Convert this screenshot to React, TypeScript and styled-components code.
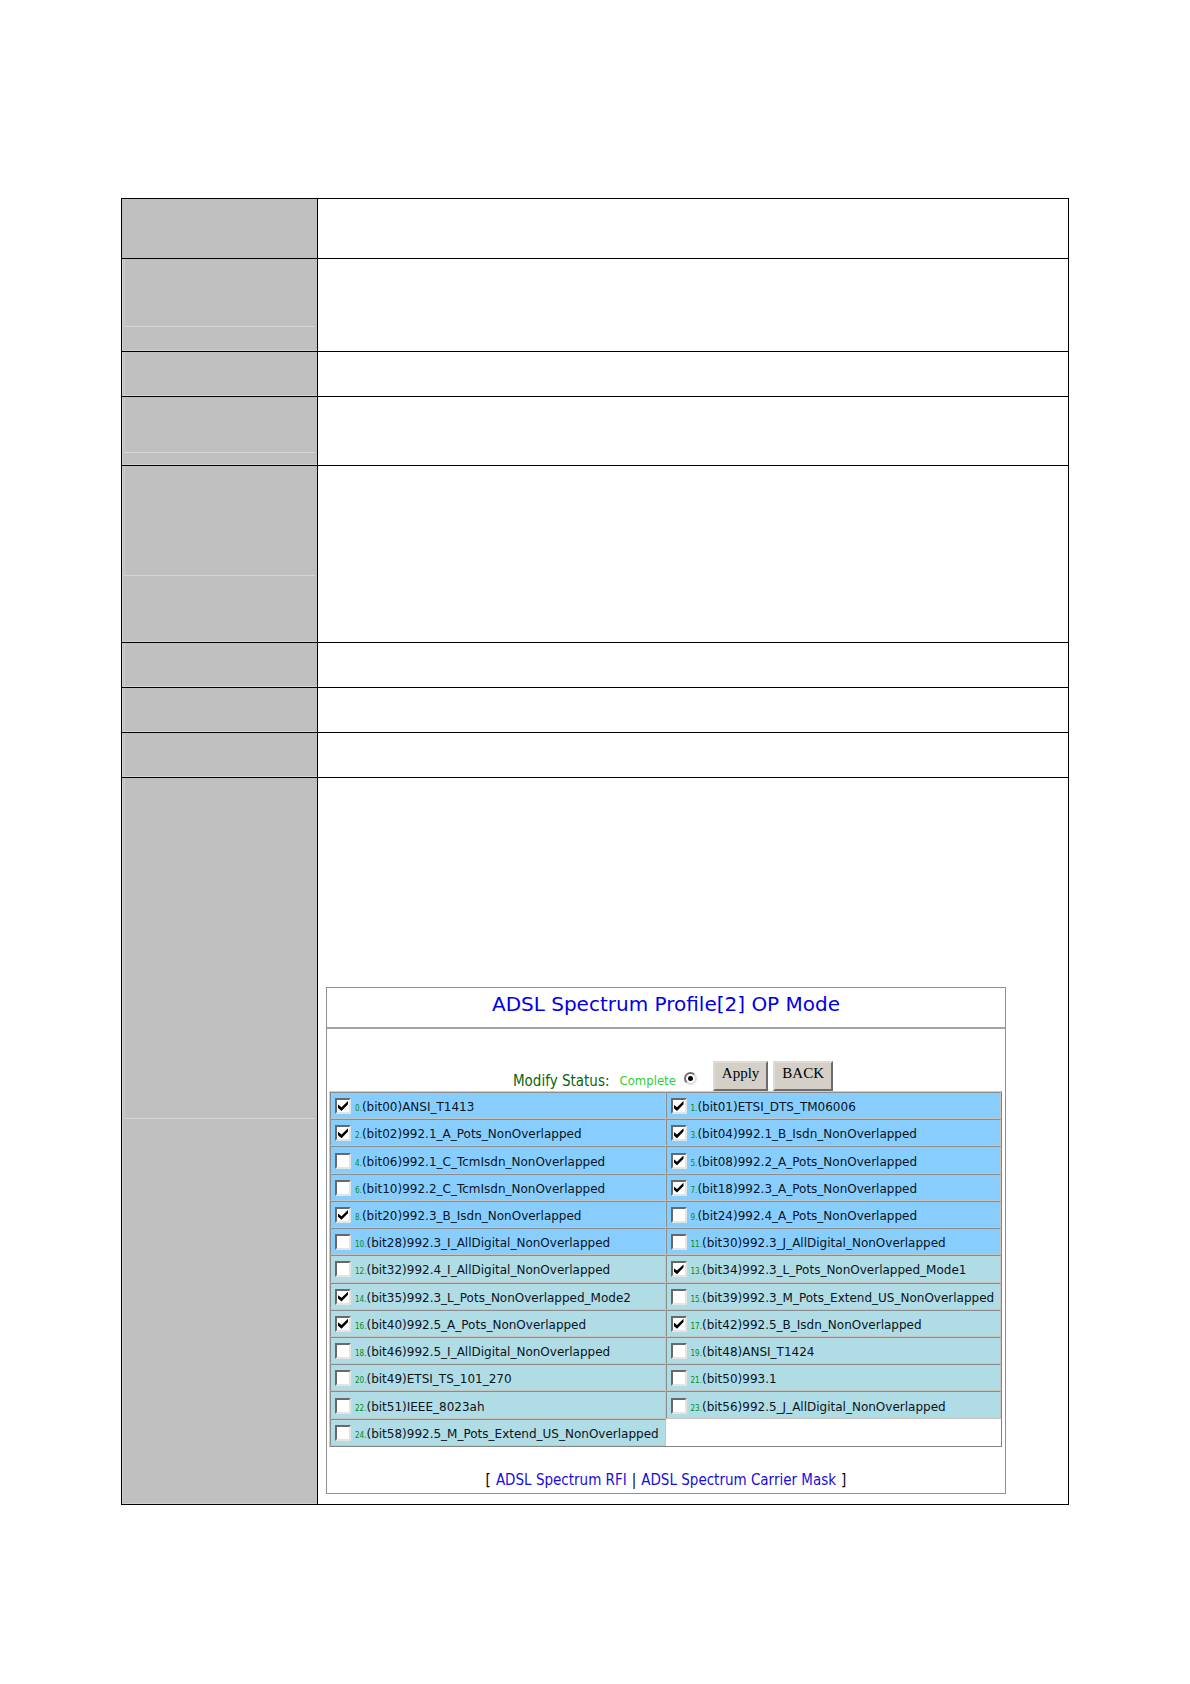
import React, { FC } from 'react';
import styled, { createGlobalStyle } from 'styled-components';

const Colors = {
  black: '#000000',
  white: '#ffffff',
  grey: '#c0c0c0',
  greyLight: '#d6d6d6',
  line: '#909090',
  sky: '#87ceff',
  pale: '#b0dce6',
  link: '#1a0be0',
  title: '#0000e6',
};

const Fonts = {
  wide: "'DejaVu Sans', sans-serif",
  narrow: "'DejaVu Sans Condensed', 'DejaVu Sans', sans-serif",
  serif: "'Liberation Serif', serif",
};

const GlobalStyle = createGlobalStyle`
* {
  box-sizing: border-box;
}
body {
  margin: 0;
  background-color: ${Colors.white};
  font-family: ${Fonts.narrow};
}
`;

const Page = styled.main`
padding: 198px 121px 179px;
`;

const Sheet = styled.div`
border: 1px solid ${Colors.black};
`;

const SheetRow = styled.div<{ $height: number }>`
display: grid;
grid-template-columns: 196px 1fr;
min-height: ${({ $height }) => $height}px;
border-bottom: 1px solid ${Colors.black};
&:last-child {
  border-bottom: none;
}
`;

const SideCell = styled.div<{ $plain?: boolean }>`
background-color: ${Colors.grey};
border-right: 1px solid ${Colors.black};
box-shadow: ${({ $plain }) => ($plain ? 'none' : 'inset 1px -1px 0 #d0d0d0')};
padding: 0 2px;
`;

const SideBlock = styled.div<{ $height: number }>`
height: ${({ $height }) => $height}px;
border-left: 1px solid #cccccc;
border-bottom: 1px solid ${Colors.greyLight};
`;

const MainCell = styled.div`
padding: 0 8px 10px;
`;

const Panel = styled.section`
width: 100%;
max-width: 680px;
margin-top: 209px;
border: 1px solid ${Colors.line};
`;

const PanelTitle = styled.h1`
margin: 0;
height: 41px;
padding-top: 4px;
border-bottom: 2px solid #a4a4a4;
text-align: center;
font-family: ${Fonts.wide};
font-size: 20px;
line-height: 24px;
font-weight: normal;
color: ${Colors.title};
`;

const Toolbar = styled.div`
display: flex;
justify-content: center;
align-items: flex-end;
height: 62px;
padding-left: 14px;
`;

const StatusLabel = styled.span`
font-size: 15px;
line-height: 20px;
color: #0a640a;
margin-right: 10px;
`;

const RadioLabel = styled.label`
display: flex;
align-items: center;
gap: 8px;
margin-right: 16px;
font-size: 13px;
line-height: 20px;
color: #32cd32;
`;

const Radio = styled.input`
appearance: none;
width: 13px;
height: 13px;
margin: 0 0 6px;
border: 2px solid;
border-color: #707070 #dddddd #dddddd #707070;
border-radius: 50%;
background: radial-gradient(circle, ${Colors.black} 0 2px, ${Colors.white} 3px);
`;

const Buttons = styled.div`
display: flex;
gap: 5px;
`;

const Button = styled.button`
height: 30px;
padding: 0 7px 6px;
border: 2px solid;
border-color: #dedad4 #6c6c6c #6c6c6c #dedad4;
background-color: #d4d0c8;
font-family: ${Fonts.serif};
font-size: 15px;
line-height: 20px;
color: ${Colors.black};
`;

const ModeTable = styled.table`
width: calc(100% - 5px);
height: 356px;
margin-left: 2px;
table-layout: fixed;
border-collapse: separate;
border-spacing: 0;
border: 1px solid;
border-color: #d0ccc8 #848484 #848484 #d0ccc8;
`;

const ModeCell = styled.td<{ $pale: boolean }>`
padding: 0 0 0 4px;
border: 1px solid;
border-color: #8c8c8c #c8c4c0 #c8c4c0 #8c8c8c;
background-color: ${({ $pale }) => ($pale ? Colors.pale : Colors.sky)};
`;

const EmptyCell = styled.td`
padding: 0;
`;

const ModeLabel = styled.label`
display: flex;
align-items: baseline;
height: 23px;
font-family: ${Fonts.wide};
font-size: 12px;
line-height: 27px;
white-space: nowrap;
color: #0a1420;
`;

const Checkbox = styled.input`
appearance: none;
flex: none;
align-self: flex-start;
width: 16px;
height: 16px;
margin: 4px 4px 0 0;
border: 2px solid;
border-color: #686868 #e4e4e4 #e4e4e4 #686868;
background-color: ${Colors.white};
&:checked::after {
  content: '';
  display: block;
  width: 10px;
  height: 10px;
  margin: 1px;
  background-color: ${Colors.black};
  clip-path: polygon(0 35%, 35% 62%, 100% 0, 100% 32%, 35% 98%, 0 68%);
}
`;

const ModeIndex = styled.span`
font-family: ${Fonts.narrow};
font-size: 8px;
color: #008c14;
`;

const Footer = styled.nav`
display: flex;
justify-content: center;
gap: 5px;
padding: 23px 0 3px;
font-size: 15px;
line-height: 20px;
`;

const FooterLink = styled.a`
color: ${Colors.link};
text-decoration: none;
`;

const modes = [
  { name: '(bit00)ANSI_T1413', on: true },
  { name: '(bit01)ETSI_DTS_TM06006', on: true },
  { name: '(bit02)992.1_A_Pots_NonOverlapped', on: true },
  { name: '(bit04)992.1_B_Isdn_NonOverlapped', on: true },
  { name: '(bit06)992.1_C_TcmIsdn_NonOverlapped', on: false },
  { name: '(bit08)992.2_A_Pots_NonOverlapped', on: true },
  { name: '(bit10)992.2_C_TcmIsdn_NonOverlapped', on: false },
  { name: '(bit18)992.3_A_Pots_NonOverlapped', on: true },
  { name: '(bit20)992.3_B_Isdn_NonOverlapped', on: true },
  { name: '(bit24)992.4_A_Pots_NonOverlapped', on: false },
  { name: '(bit28)992.3_I_AllDigital_NonOverlapped', on: false },
  { name: '(bit30)992.3_J_AllDigital_NonOverlapped', on: false },
  { name: '(bit32)992.4_I_AllDigital_NonOverlapped', on: false },
  { name: '(bit34)992.3_L_Pots_NonOverlapped_Mode1', on: true },
  { name: '(bit35)992.3_L_Pots_NonOverlapped_Mode2', on: true },
  { name: '(bit39)992.3_M_Pots_Extend_US_NonOverlapped', on: false },
  { name: '(bit40)992.5_A_Pots_NonOverlapped', on: true },
  { name: '(bit42)992.5_B_Isdn_NonOverlapped', on: true },
  { name: '(bit46)992.5_I_AllDigital_NonOverlapped', on: false },
  { name: '(bit48)ANSI_T1424', on: false },
  { name: '(bit49)ETSI_TS_101_270', on: false },
  { name: '(bit50)993.1', on: false },
  { name: '(bit51)IEEE_8023ah', on: false },
  { name: '(bit56)992.5_J_AllDigital_NonOverlapped', on: false },
  { name: '(bit58)992.5_M_Pots_Extend_US_NonOverlapped', on: false },
];

const rowStarts = modes.map((_, i) => i).filter((i) => i % 2 === 0);

const Mode: FC<{ index: number }> = ({ index }) => {
  const mode = modes[index];
  if (!mode) {
    return <EmptyCell />;
  }
  return (
    <ModeCell $pale={index > 11}>
      <ModeLabel>
        <Checkbox type="checkbox" defaultChecked={mode.on} />
        <ModeIndex>{index}.</ModeIndex>
        {mode.name}
      </ModeLabel>
    </ModeCell>
  );
};

const OpModePanel: FC = () => {
  return (
    <Panel>
      <PanelTitle>ADSL Spectrum Profile[2] OP Mode</PanelTitle>
      <Toolbar>
        <StatusLabel>Modify Status:</StatusLabel>
        <RadioLabel>
          Complete
          <Radio type="radio" name="status" defaultChecked />
        </RadioLabel>
        <Buttons>
          <Button type="button">Apply</Button>
          <Button type="button">BACK</Button>
        </Buttons>
      </Toolbar>
      <ModeTable>
        <tbody>
          {rowStarts.map((start) => (
            <tr key={start}>
              <Mode index={start} />
              <Mode index={start + 1} />
            </tr>
          ))}
        </tbody>
      </ModeTable>
      <Footer>
        <span>[</span>
        <FooterLink href="#rfi">ADSL Spectrum RFI</FooterLink>
        <span>|</span>
        <FooterLink href="#mask">ADSL Spectrum Carrier Mask</FooterLink>
        <span>]</span>
      </Footer>
    </Panel>
  );
};

// height of each row, and where the light rule falls in its grey cell
const sheetRows = [
  { height: 60 },
  { height: 93, block: 68 },
  { height: 45, block: 44 },
  { height: 69, block: 56 },
  { height: 177, block: 110 },
  { height: 45, block: 44 },
  { height: 45, block: 44 },
  { height: 45, block: 44 },
];

const App: FC = () => {
  return (
    <>
      <GlobalStyle />
      <Page>
        <Sheet>
          {sheetRows.map((row, i) => (
            <SheetRow key={i} $height={row.height}>
              <SideCell $plain={!row.block}>{row.block && <SideBlock $height={row.block} />}</SideCell>
              <MainCell />
            </SheetRow>
          ))}
          <SheetRow $height={726}>
            <SideCell>
              <SideBlock $height={341} />
            </SideCell>
            <MainCell>
              <OpModePanel />
            </MainCell>
          </SheetRow>
        </Sheet>
      </Page>
    </>
  );
};

export default App;
